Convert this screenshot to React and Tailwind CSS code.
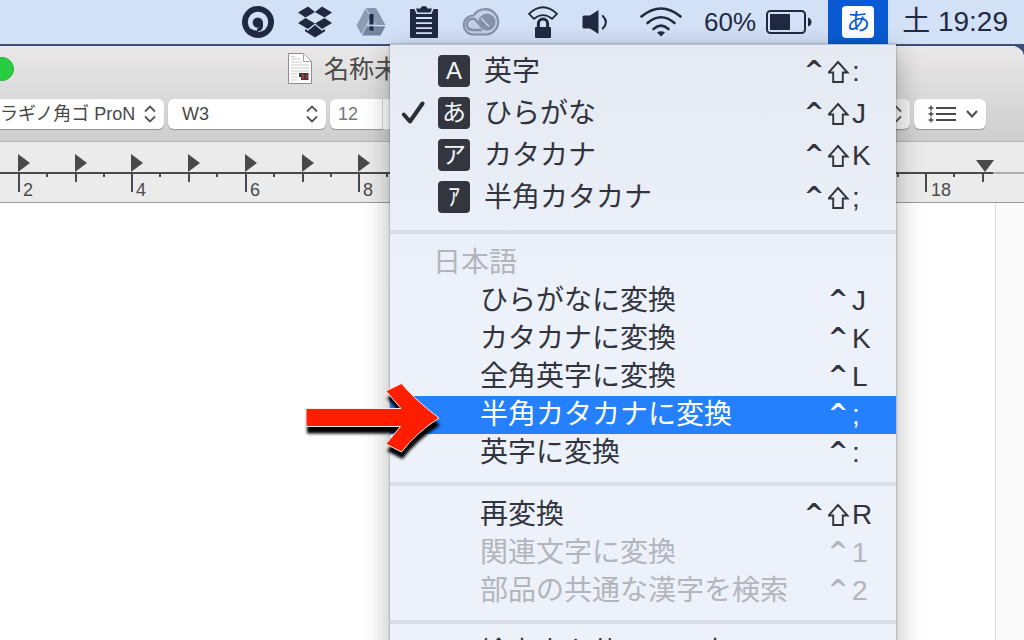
import React from "react";

const INK = "#1f2a42";

function SwirlIcon() {
  return (
    <svg width="32" height="32" viewBox="0 0 32 32" aria-hidden="true">
      <circle cx="16" cy="16" r="16" fill={INK} />
      <circle cx="16" cy="16" r="10.2" fill="#d3e1f6" />
      <circle cx="15.8" cy="16.6" r="5.2" fill={INK} />
      <path d="M19.4 15.5 V20 Q19.4 23.4 15.2 24.2" fill="none" stroke={INK} strokeWidth="3.2" />
      <path d="M9 22.5 Q12 25 16 24.2 L16 28 H9 Z" fill={INK} />
    </svg>
  );
}

function DropboxIcon() {
  return (
    <svg width="34" height="32" viewBox="0 0 34 32" fill={INK} aria-hidden="true">
      <path d="M10 0.5 L17 6 L7.5 11.5 L0 6.5 Z" />
      <path d="M24 0.5 L34 6.5 L26.5 11.5 L17 6 Z" />
      <path d="M7.5 12 L17 17.5 L10 23 L0 17 Z" />
      <path d="M26.5 12 L34 17 L24 23 L17 17.5 Z" />
      <path d="M17 19 L24 24.7 L27 23 V25.3 L17 31.5 L7 25.3 V23 L10 24.7 Z" />
    </svg>
  );
}

function DriveIcon() {
  return (
    <svg width="30" height="30" viewBox="0 0 30 30" aria-hidden="true">
      <path d="M10 1 H20 L29.5 18 H19.5 Z" fill="#8795b0" />
      <path d="M9.5 1.5 L14.5 10 L5.5 27.5 L0.5 18.5 Z" fill="#8f9cb6" />
      <path d="M10.5 19.3 H29.5 L24.5 28.5 H6 Z" fill="#76859f" />
      <path d="M15 9.5 L10.5 18.6 H19.8 Z" fill="#aebcd4" />
      <path d="M13.5 7 H17.5 V17.5 H13.5 Z M13.5 19.5 H17.5 V23.5 H13.5 Z" fill={INK} />
    </svg>
  );
}

function ClipboardIcon() {
  return (
    <svg width="28" height="32" viewBox="0 0 28 32" aria-hidden="true">
      <path d="M1 3 H4.5 L6.5 8 H21.5 L23.5 3 H27 Q28 3 28 4 V31 Q28 32 27 32 H1 Q0 32 0 31 V4 Q0 3 1 3 Z" fill={INK} />
      <path d="M6 2.5 H10.5 Q11 0 14 0 Q17 0 17.5 2.5 H22 L20.5 6.6 H7.5 Z" fill={INK} />
      <path d="M6 12 H22 M6 17.2 H22 M6 22.2 H22 M6 27.2 H22" stroke="#d3e1f6" strokeWidth="1.8" />
    </svg>
  );
}

function CloudIcon() {
  return (
    <svg width="38" height="28" viewBox="0 0 38 28" fill="none" aria-hidden="true">
      <path d="M11 26.5 A9.5 9.5 0 0 1 11.5 7.5 Q15.5 1.2 24 1.2 A12.7 12.7 0 0 1 25 26.5 Z" fill="#c3d0e6" stroke="#8591ab" strokeWidth="2.2" />
      <circle cx="25" cy="14" r="8.6" fill="#8591ab" />
      <path d="M20 19 L13.5 11.8 A5.6 5.6 0 1 0 11 22 H17" stroke="#8591ab" strokeWidth="2.6" />
      <path d="M26.5 19.5 L17.5 9.5 M17 22 H20" stroke="#8591ab" strokeWidth="2.6" />
      <path d="M19 10 L27 18.5" stroke="#c3d0e6" strokeWidth="1.6" />
    </svg>
  );
}

function WifiLockIcon() {
  return (
    <svg width="30" height="32" viewBox="0 0 30 32" fill="none" aria-hidden="true">
      <path d="M1 7.8 Q15 -5.2 29 7.8 L24 12.8 Q15 5.4 6 12.8 Z" stroke={INK} strokeWidth="1.8" strokeLinejoin="round" />
      <path d="M10.4 22 V17.5 A4.6 4.6 0 0 1 19.6 17.5 V22" stroke={INK} strokeWidth="3" />
      <rect x="7" y="21" width="16" height="11" rx="1" fill={INK} />
    </svg>
  );
}

function SpeakerIcon() {
  return (
    <svg width="26" height="26" viewBox="0 0 26 26" fill="none" aria-hidden="true">
      <path d="M2 6.5 H8 L16.5 1 V25 L8 19.5 H2 Q0.5 19.5 0.5 18 V8 Q0.5 6.5 2 6.5 Z" fill={INK} />
      <path d="M20.8 7 Q27 13 20.8 19.5" stroke={INK} strokeWidth="2" strokeLinecap="round" />
    </svg>
  );
}

function WifiIcon() {
  return (
    <svg width="42" height="30" viewBox="0 0 42 30" fill="none" aria-hidden="true">
      <path d="M1.5 9.5 Q21 -6.5 40.5 9.5" stroke={INK} strokeWidth="2.6" strokeLinecap="round" />
      <path d="M7.5 16 Q21 4.5 34.5 16" stroke={INK} strokeWidth="2.6" strokeLinecap="round" />
      <path d="M13.5 22 Q21 15.4 28.5 22" stroke={INK} strokeWidth="2.6" strokeLinecap="round" />
      <path d="M17 25.6 Q21 22.8 25 25.6 L21 29.6 Z" fill={INK} />
    </svg>
  );
}

function BatteryIcon() {
  return (
    <svg width="46" height="24" viewBox="0 0 46 24" aria-hidden="true">
      <rect x="1" y="1" width="38" height="22" rx="3.5" fill="none" stroke={INK} strokeWidth="2" />
      <rect x="4" y="4" width="20" height="16" fill={INK} />
      <path d="M42 7.5 Q45.5 8.5 45.5 12 Q45.5 15.5 42 16.5 Z" fill={INK} />
    </svg>
  );
}

function UpDown() {
  return (
    <svg width="12" height="18" viewBox="0 0 12 18" fill="none" stroke="#555" strokeWidth="1.8" aria-hidden="true">
      <path d="M1 6.5 L6 1.5 L11 6.5 M1 11.5 L6 16.5 L11 11.5" />
    </svg>
  );
}

function MenuBar() {
  return (
    <header className="flex h-11 shrink-0 items-center justify-end bg-[#d3e1f6] text-[#1f2a42]">
      <div className="mr-7 flex items-center gap-6">
        <SwirlIcon />
        <DropboxIcon />
        <DriveIcon />
        <ClipboardIcon />
        <CloudIcon />
      </div>
      <div className="mr-8 flex items-center gap-6">
        <WifiLockIcon />
        <SpeakerIcon />
      </div>
      <WifiIcon />
      <span className="mr-2.5 ml-[22px] text-[26px] leading-8">60%</span>
      <BatteryIcon />
      <button type="button" className="ml-4 flex h-11 w-15 items-center justify-center bg-[#0a5bd3]">
        <span className="flex size-8 items-center justify-center rounded bg-white text-[24px] leading-8 text-[#0a5bd3]">あ</span>
      </button>
      <time className="mr-4 ml-3.5 text-[28px] leading-8 whitespace-nowrap">土 19:29</time>
    </header>
  );
}

function DocumentIcon() {
  return (
    <svg width="24" height="31" viewBox="0 0 24 31" aria-hidden="true">
      <path d="M0.5 0.5 H15.5 L23.5 8.5 V30.5 H0.5 Z" fill="#fcfcfc" stroke="#8e8e8e" />
      <path d="M15.5 0.5 V8.5 H23.5 Z" fill="#fff" stroke="#a5a5a5" />
      <path d="M3 3.5 H7 M3 6 H13 M3 9 H14 M3 12 H21 M3 15 H21 M3 18 H21 M3 21 H9 M3 24 H9 M3 27 H9" stroke="#c9cfcb" strokeWidth="1" />
      <path d="M11 20 H20.5 V27 H13 V24 H11 Z" fill="#443536" />
      <path d="M14 21 H16 V26 H14 Z M18 22 H20 V25 H18 Z" fill="#a33b3b" />
    </svg>
  );
}

function Toolbar() {
  return (
    <div className="flex h-[42px] items-start pt-0.5 text-[18px] text-[#484848]">
      <div className="relative -ml-5 h-[30px] w-[184px] shrink-0 rounded-md bg-white shadow-[0_1px_1px_rgba(0,0,0,0.3)]">
        <select aria-label="フォント" className="h-[30px] w-full appearance-none bg-transparent pl-0.5">
          <option>ヒラギノ角ゴ ProN</option>
        </select>
        <span className="pointer-events-none absolute top-1.5 right-2">
          <UpDown />
        </span>
      </div>
      <div className="relative ml-1 h-[30px] w-[158px] shrink-0 rounded-md bg-white shadow-[0_1px_1px_rgba(0,0,0,0.3)]">
        <select aria-label="ウェイト" className="h-[30px] w-full appearance-none bg-transparent pl-3.5">
          <option>W3</option>
        </select>
        <span className="pointer-events-none absolute top-1.5 right-2">
          <UpDown />
        </span>
      </div>
      <input
        aria-label="サイズ"
        defaultValue="12"
        className="ml-1 h-[30px] w-[53px] shrink-0 rounded-l-md border-r border-[#d0d0d0] bg-white pl-2 text-[#777] shadow-[0_1px_1px_rgba(0,0,0,0.3)]"
      />
      <div className="h-[30px] w-6 shrink-0 rounded-r-md bg-white" />
      <div className="flex-1" />
      <button type="button" aria-label="行間" className="mr-1 flex h-[30px] w-20 shrink-0 items-center justify-end rounded-md bg-[#f4f4f4] pr-2 shadow-[0_1px_1px_rgba(0,0,0,0.3)]">
        <UpDown />
      </button>
      <button type="button" aria-label="リスト" className="mr-[38px] flex h-[30px] w-[72px] shrink-0 items-center justify-between rounded-md bg-white pr-2 pl-3.5 shadow-[0_1px_1px_rgba(0,0,0,0.3)]">
        <svg width="28" height="18" viewBox="0 0 28 18" fill="none" stroke="#4a4a4a" strokeWidth="2" aria-hidden="true">
          <path d="M8 3 H28 M8 9 H28 M8 15 H28" />
          <path d="M0.5 3 H5.5 M0.5 9 H5.5 M0.5 15 H5.5 M3 0.5 V5.5 M3 6.5 V11.5 M3 12.5 V17.5" strokeWidth="1.4" />
        </svg>
        <svg width="12" height="8" viewBox="0 0 12 8" fill="none" stroke="#4a4a4a" strokeWidth="2" aria-hidden="true">
          <path d="M1 1 L6 6.5 L11 1" />
        </svg>
      </button>
    </div>
  );
}

const UNITS = Array.from({ length: 17 }, (_, i) => i + 2);
const LABELLED = [2, 4, 6, 8, 18];

function Ruler() {
  return (
    <div className="h-[62px] shrink-0 overflow-hidden border-t border-b border-t-[#b4b4b4] border-b-[#9c9c9c] bg-[#ebebeb]">
      <svg width="1024" height="60" viewBox="0 0 1024 60" aria-label="ルーラ">
        <path d="M993 31 H1024" stroke="#9a9a9a" strokeWidth="1.5" />
        <path d="M0 31 H993" stroke="#4a4a4a" strokeWidth="2" />
        {UNITS.map((n) => {
          const x = Math.round(19 + (n - 2) * 56.7);
          return (
            <g key={n}>
              {n < 18 && <path d={`M${x - 1} 12 L${x + 11} 21 L${x - 1} 30 Z`} fill="#4a4a4a" />}
              <path d={`M${x} 31 V${n % 2 ? 40 : 50} M${x + 28} 31 V35`} stroke="#4a4a4a" strokeWidth="2" />
              {LABELLED.includes(n) && (
                <text x={x + (n > 9 ? 5 : 4)} y="54" fontSize="18" fill="#4a4a4a">
                  {n}
                </text>
              )}
            </g>
          );
        })}
        <path d="M976 18 H994 L985 30 Z M982 31 H984 V40 H982 Z" fill="#4a4a4a" />
      </svg>
    </div>
  );
}

function EditorWindow() {
  return (
    <div className="flex flex-1 flex-col overflow-hidden bg-[#3f5078] pt-0.5">
      <div className="flex flex-1 flex-col overflow-hidden rounded-tr-xl bg-white">
        <div className="h-[95px] shrink-0 bg-linear-to-b from-[#eae8e9] to-[#cecece]">
          <div className="flex h-[51px] items-center pb-1.5">
            <button type="button" aria-label="拡大" className="-ml-2.5 size-6 shrink-0 rounded-full border border-[#22b43a] bg-[#28cd41]" />
            <div className="ml-[274px] flex items-center gap-3 text-[25px] leading-8 text-[#4a4a4a]">
              <DocumentIcon />
              <h1>名称未設定</h1>
            </div>
          </div>
          <Toolbar />
        </div>
        <Ruler />
        <main className="flex flex-1">
          <div className="flex-1 bg-white" />
          <div className="w-[29px] border-l border-[#dcdcdc] bg-[#fafafa]" />
        </main>
      </div>
    </div>
  );
}

function Shortcut({ shift, keyName }) {
  return (
    <span className="ml-auto flex items-center">
      <span className="w-6 pr-1.5 pb-1 text-center font-['DejaVu_Sans',sans-serif] text-[24px] leading-8 font-bold">^</span>
      {shift && (
        <svg width="24" height="24" viewBox="0 0 24 24" fill="none" role="img" aria-label="Shift">
          <path d="M10 2 L19.5 12.5 H14.8 V22 H5.2 V12.5 H0.5 Z" stroke="currentColor" strokeWidth="1.9" />
        </svg>
      )}
      <span className="w-6 text-left">{keyName}</span>
    </span>
  );
}

const MODES = [
  { glyph: "A", label: "英字", keyName: ":" },
  { glyph: "あ", label: "ひらがな", keyName: "J", checked: true },
  { glyph: "ア", label: "カタカナ", keyName: "K" },
  { glyph: "ｱ", label: "半角カタカナ", keyName: ";" },
];

const CONVERSIONS = [
  { label: "ひらがなに変換", keyName: "J" },
  { label: "カタカナに変換", keyName: "K" },
  { label: "全角英字に変換", keyName: "L" },
  { label: "半角カタカナに変換", keyName: ";", active: true },
  { label: "英字に変換", keyName: ":" },
];

const EXTRAS = [
  { label: "再変換", keyName: "R", shift: true },
  { label: "関連文字に変換", keyName: "1", disabled: true },
  { label: "部品の共通な漢字を検索", keyName: "2", disabled: true },
];

function Row({ label, keyName, shift, active, disabled }) {
  const tone = active ? "bg-[#2480fc] text-white" : disabled ? "text-[#b2b5bc]" : "text-[#31343d]";
  return (
    <button type="button" role="menuitem" disabled={disabled} className={`flex h-[38px] w-full shrink-0 items-center pr-5 pl-[90px] whitespace-nowrap ${tone}`}>
      {label}
      {keyName && <Shortcut shift={shift} keyName={keyName} />}
    </button>
  );
}

function Separator() {
  return <div role="separator" className="my-2.5 h-1 shrink-0 bg-[#d9dee6]" />;
}

function InputMenu() {
  return (
    <div role="menu" className="absolute top-11 right-32 flex w-[506px] flex-col border-t border-[#b6c3d8] bg-linear-to-b from-[#e5e9f1] to-[#edf1f9] to-40% text-[28px] leading-8 text-[#31343d] shadow-[0_8px_26px_rgba(0,0,0,0.3),0_0_2px_rgba(0,0,0,0.4)]">
      <div className="flex flex-col pt-[5px] pb-0.5">
        {MODES.map((m) => (
          <button key={m.label} type="button" role="menuitemradio" aria-checked={!!m.checked} className="flex h-[42px] shrink-0 items-center pr-5 pl-3 whitespace-nowrap">
            <span className="w-9">
              {m.checked && (
                <svg width="23" height="24" viewBox="0 0 23 24" fill="none" aria-hidden="true">
                  <path d="M1.8 13.5 L8 20.5 L20.5 2.5" stroke="#2b2e36" strokeWidth="4" strokeLinecap="round" strokeLinejoin="round" />
                </svg>
              )}
            </span>
            <span className="mr-3.5 flex size-8 items-center justify-center rounded bg-[#33363f] text-[24px] leading-8 text-[#f4f6fa]">{m.glyph}</span>
            <span className="flex flex-1 items-center pt-0.5">
              {m.label}
              <Shortcut shift keyName={m.keyName} />
            </span>
          </button>
        ))}
      </div>
      <Separator />
      <div className="flex h-[38px] shrink-0 items-center pl-[43px] text-[#b2b5bc]">日本語</div>
      {CONVERSIONS.map((c) => (
        <Row key={c.label} {...c} />
      ))}
      <Separator />
      {EXTRAS.map((e) => (
        <Row key={e.label} {...e} />
      ))}
      <Separator />
      <Row label="絵文字を使って入力" />
    </div>
  );
}

function PointerArrow() {
  return (
    <svg className="pointer-events-none absolute top-[376px] right-[578px]" width="146" height="92" viewBox="300 376 146 92" aria-hidden="true">
      <defs>
        <filter id="soft" x="-10%" y="-10%" width="120%" height="130%">
          <feGaussianBlur stdDeviation="1.6" />
        </filter>
      </defs>
      <path transform="translate(1 7)" d="M306 408.5 H401 L386 391 L401.5 383.5 Q414 399 439 418 Q416 433 401.5 452 L386 444 L400.5 426.5 H306 Z" fill="#000" filter="url(#soft)" />
      <path d="M306 408.5 H401 L386 391 L401.5 383.5 Q414 399 439 418 Q416 433 401.5 452 L386 444 L400.5 426.5 H306 Z" fill="#ff1f00" stroke="#ffe9e4" strokeWidth="1" />
    </svg>
  );
}

export default function App() {
  return (
    <div className="relative flex h-screen flex-col overflow-hidden font-['Liberation_Sans','Noto_Sans_CJK_JP',sans-serif]">
      <MenuBar />
      <EditorWindow />
      <InputMenu />
      <PointerArrow />
    </div>
  );
}
